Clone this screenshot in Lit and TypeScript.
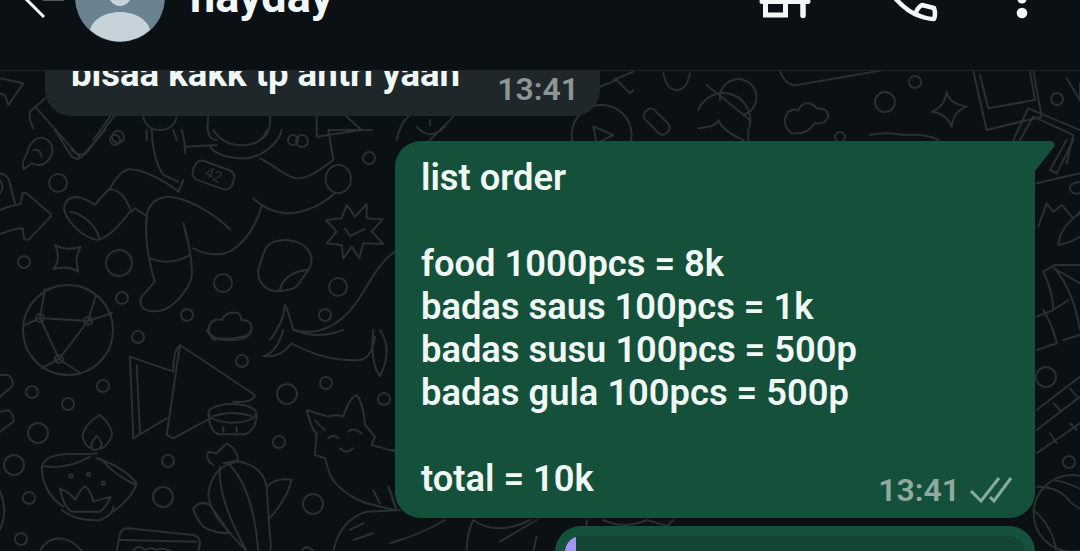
import { LitElement, css, html, svg } from 'lit'
import { customElement } from 'lit/decorators.js'

const ORDER_LINES: string[] = [
  'list order',
  '',
  'food 1000pcs = 8k',
  'badas saus 100pcs = 1k',
  'badas susu 100pcs = 500p',
  'badas gula 100pcs = 500p',
  '',
  'total = 10k',
]

// small rings scattered across the wallpaper: x, y, r
const RINGS: number[][] = [
  [118, 137, 6], [58, 183, 9], [24, 262, 6], [119, 263, 13], [223, 283, 9], [122, 298, 6],
  [187, 315, 6], [138, 337, 6], [302, 141, 6], [369, 158, 6], [338, 287, 9], [325, 315, 6],
  [32, 392, 6], [103, 386, 6], [68, 404, 6], [38, 433, 10], [14, 465, 10], [29, 498, 6],
  [21, 539, 6], [168, 461, 6], [163, 497, 10], [242, 361, 6], [287, 394, 10], [326, 383, 6],
  [384, 399, 6], [279, 442, 6], [313, 504, 10], [915, 82, 6], [885, 102, 10], [1057, 99, 6],
  [840, 137, 5], [1069, 462, 6], [1046, 377, 10], [115, 140, 5], [293, 140, 5],
]

const wallpaper = svg`
  ${RINGS.map(([x, y, r]) => svg`<circle cx=${x} cy=${y} r=${r}></circle>`)}

  <!-- globe -->
  <circle cx="68" cy="330" r="45"></circle>
  <path d="M25 325 L40 318 L88 321 L112 313 M40 318 L59 359 L88 321 M45 289 L40 318 M88 321 L96 295 M59 359 L42 368 M59 359 L80 373"></path>
  <circle cx="40" cy="318" r="4"></circle><circle cx="88" cy="321" r="4"></circle><circle cx="59" cy="359" r="4"></circle>

  <!-- astronaut and the shapes around it -->
  <g transform="translate(0 130) scale(.3333)" stroke-width="6">
    <path d="M0 240 C20 230 45 225 62 222 L68 190 Q75 185 85 195 L150 250 Q155 257 150 262 L90 325 Q80 335 72 325 L68 295 C45 295 20 305 0 312"></path>
    <path d="M0 130 Q25 135 30 160 L45 222 M0 150 Q15 170 0 190"></path>
    <path d="M192 235 Q195 205 225 200 Q260 205 285 225 C300 205 320 185 330 175 C355 130 375 115 395 118 C440 125 490 150 535 185 L550 150"></path>
    <path d="M330 178 Q365 180 385 225 L395 245 L405 235 L440 258"></path>
    <path d="M192 235 C195 265 240 320 290 330 Q330 325 390 245"></path>
    <path d="M210 245 C250 250 290 290 298 325"></path>
    <path d="M440 258 C435 320 440 360 460 440 L465 455 L425 500 Q415 520 430 535 Q450 550 490 540 C530 525 570 470 575 440 Q578 400 565 340 L550 280"></path>
    <path d="M440 258 C445 220 470 205 500 200 C560 200 640 250 690 298"></path>
    <path d="M450 385 Q510 410 570 375"></path>
    <path d="M580 355 Q640 385 690 365 C740 335 770 280 785 228"></path>
    <path d="M455 0 C455 50 470 110 490 135 L535 155 M545 0 Q555 30 555 70 M555 50 L650 45"></path>
    <path d="M640 0 Q670 50 740 45 Q790 40 800 0 M630 50 Q650 80 720 85 C790 90 840 30 845 0"></path>
    <path d="M780 85 C830 110 870 150 900 145 C940 140 970 110 1000 90 L985 0 L1115 0"></path>
    <rect x="578" y="105" width="125" height="60" rx="22" transform="rotate(20 640 135)"></rect>
    <text class="tag" x="640" y="150" transform="rotate(25 640 135)" text-anchor="middle">42</text>
    <ellipse cx="1015" cy="147" rx="38" ry="42"></ellipse>
    <path d="M760 205 Q800 245 860 250 C920 250 970 220 1005 190"></path>
    <path d="M1040 225 L1065 260 L1100 222 L1100 265 L1148 268 L1115 305 L1150 342 L1090 340 L1078 385 L1055 350 L1030 385 L1025 345 L980 340 L1010 305 L978 270 L1025 265 Z"></path>
    <path d="M1035 295 L1050 318 L1095 297"></path>
    <path d="M800 350 C830 320 900 325 925 360 Q945 390 925 420 L890 470 Q850 490 810 480 Q770 460 775 420 Q785 380 800 350 Z M840 480 Q850 430 920 420"></path>
    <path d="M165 345 Q200 365 242 350 Q222 385 235 425 Q200 405 160 418 Q185 385 165 345 Z"></path>
    <path d="M72 118 C60 90 85 75 85 55 C100 20 135 10 155 45 Q165 75 135 100 Q120 110 95 100 L72 118 M100 60 Q120 55 125 80"></path>
    <path d="M165 0 L215 80 Q235 95 250 75 L315 0"></path>
    <path d="M640 630 Q615 600 635 575 Q650 565 665 570 Q680 540 715 550 Q725 560 725 570 Q755 570 755 595 Q750 620 725 620 Q690 630 660 625 Z"></path>
    <path d="M1185 365 C1130 400 1100 480 1060 530 C1020 580 960 620 880 600 C870 570 865 540 855 525 Q850 570 835 590 Q820 620 810 630"></path>
  </g>

  <!-- lower left: paper scraps, lamp, cactus, fox -->
  <g transform="translate(0 330) scale(.3333)" stroke-width="6">
    <path d="M0 135 L25 135 Q45 155 35 170 L0 200 M0 245 L25 240 Q45 260 40 275 L0 305 M0 485 Q25 540 0 600"></path>
    <path d="M790 78 Q830 70 850 0 M790 78 Q840 85 875 40 C930 70 1000 95 1080 90 Q1115 85 1125 20 M1140 0 Q1180 60 1140 138 Q1110 100 1120 0 M885 0 Q950 30 1030 0"></path>
    <path d="M620 0 Q640 35 700 30 Q745 30 755 0"></path>
    <path d="M390 80 L520 125 M540 45 L765 195 Q760 220 700 215 M540 45 L500 315 L520 325 L630 265 M390 80 L400 325 L500 265 M410 105 L420 310 M540 45 Q520 60 520 125"></path>
    <ellipse cx="697" cy="250" rx="72" ry="28"></ellipse>
    <path d="M625 250 Q630 310 660 313 L735 313 Q770 300 770 250 M640 258 Q700 240 755 258 M670 290 L670 305 M710 292 L710 305"></path>
    <path d="M125 415 Q130 370 220 372 L270 372 L290 370 M125 415 Q130 490 190 530 M290 385 Q370 410 410 460 Q400 500 340 545 M130 408 Q200 420 270 380 M300 385 Q350 440 408 465"></path>
    <path d="M300 255 Q250 285 248 320 Q255 350 275 355 M300 255 Q340 290 335 320 Q320 350 305 355 M290 318 Q265 345 280 360 Q305 360 305 340 Q300 325 290 318"></path>
    <path d="M185 540 Q230 575 300 570 Q340 555 340 530 M180 475 Q215 490 225 510 Q240 480 255 468 Q275 485 280 515 L332 500 Q320 530 300 545 L215 545 Q190 530 180 475 Z"></path>
    <circle cx="213" cy="438" r="5"></circle><circle cx="266" cy="433" r="5"></circle><circle cx="310" cy="460" r="5"></circle>
    <path d="M625 490 Q640 400 720 395 Q790 410 800 470 L810 620 Q815 650 810 663 M625 490 Q625 540 690 610 L740 663 M660 410 Q650 500 740 663 M690 405 Q760 480 775 663"></path>
    <path d="M800 470 Q830 440 875 450 Q860 510 808 565 M580 535 Q600 510 630 525 L690 610 Q640 610 610 590 Q585 560 580 535 Z"></path>
    <path d="M640 405 Q615 390 625 365 L650 370 L680 340 Q710 355 715 390 Q695 395 670 400"></path>
    <path d="M920 240 L985 260 Q1010 250 1030 260 Q1050 200 1070 195 Q1090 220 1095 285 L1125 320 L1115 345 L1185 365 M920 240 Q935 300 950 310 L945 375 L975 385 L990 435 Q1020 490 1100 520 L1185 540"></path>
    <path d="M945 270 Q960 290 975 300 M985 325 Q1000 310 1015 325 M1045 305 Q1060 290 1085 310 M1020 355 Q1040 375 1060 355 M1120 480 L1140 520 M1165 470 L1185 530"></path>
    <path d="M1000 663 Q1020 570 1100 545 L1200 540 M1050 600 L1090 580 M1060 630 L1120 610"></path>
    <path d="M350 663 L360 610 Q365 595 385 595 L580 615 Q600 620 600 640 L595 663 M360 630 L590 635 M400 663 Q415 640 435 660 Q450 650 470 660 Q485 650 510 663"></path>
    <path d="M120 663 Q140 625 180 625 Q220 630 245 663 M905 663 Q920 640 940 663"></path>
  </g>

  <!-- strip above the outgoing bubble -->
  <g transform="translate(0 70) scale(.3333)" stroke-width="6">
    <path d="M0 25 L70 40 L25 105 L15 75 L0 70"></path>
    <path d="M135 85 L90 125 Q85 145 100 175 M105 110 L240 262 M345 135 L270 235 Q250 270 215 240"></path>
    <path d="M280 210 L330 140 M430 140 Q440 180 480 180 Q520 180 530 140 M440 210 L440 180 M520 180 L530 210"></path>
    <path d="M625 140 Q615 210 650 210 M810 140 Q815 190 780 210"></path>
    <path d="M950 140 L950 200 L1085 180 L1040 140"></path>
    <path d="M1190 210 Q1200 160 1225 140 M1290 150 L1290 165 M1250 170 Q1290 215 1335 170 M1360 140 L1290 210"></path>
  </g>
  <g transform="translate(400 60) scale(.3333)" stroke-width="6">
    <circle cx="605" cy="225" r="90"></circle>
    <path d="M580 200 L640 225 L590 250 Z M600 80 L650 60 L690 100 L700 90 M640 60 L700 35 M790 40 Q800 90 830 90 Q860 90 870 40"></path>
    <rect x="725" y="165" width="90" height="40" rx="16" transform="rotate(45 770 185)"></rect>
  </g>
  <g transform="translate(700 0) scale(.3333)" stroke-width="6">
    <path d="M240 215 Q260 260 290 255 L540 212 M20 255 L150 360"></path>
    <path d="M60 300 A 55 55 0 1 1 130 345"></path>
    <path d="M-5 330 A 75 75 0 0 1 145 390 L145 420 M-5 385 Q50 380 55 360 Q70 395 130 420"></path>
    <path d="M275 400 Q240 370 265 335 Q285 325 295 330 Q310 300 340 315 Q345 320 350 325 Q385 325 385 350 Q375 375 345 370 Q320 405 275 400 Z"></path>
    <path d="M740 275 Q745 310 800 320 Q760 335 755 380 Q740 340 695 335 Q735 320 740 275 Z"></path>
    <path d="M820 213 L860 390 L1025 350 L1000 213 M840 225 L865 325 L1005 300 L990 213"></path>
    <path d="M940 420 L985 325 L1140 390 M960 420 L1000 350 L1120 405 L1100 490 M1100 235 L1140 300 L1140 250"></path>
    <path d="M510 405 Q560 395 610 405 Q680 400 715 420"></path>
  </g>

  <!-- right edge -->
  <g transform="translate(1030 140) scale(.3333)" stroke-width="6">
    <path d="M20 130 L150 100 M110 0 L60 90 L80 100 L130 0"></path>
    <path d="M150 125 Q115 130 120 150 Q130 165 150 160"></path>
    <path d="M25 260 L50 190 L70 215 L95 195 L130 235 L150 215 M85 315 Q90 260 150 220 M85 315 Q120 310 150 290"></path>
    <path d="M40 395 Q70 460 70 510 L20 530 M40 395 L75 375 L150 375 M70 380 Q130 450 150 570 M70 510 L115 480 M80 390 L150 430 M20 630 L80 610 Q70 560 40 510 M100 600 L150 585"></path>
    <path d="M20 810 L150 710 M20 870 L150 770 M20 940 L150 850 M70 790 L90 810 M120 745 L140 770 M60 880 L80 910 M120 850 L140 870"></path>
    <circle cx="126" cy="1120" r="115"></circle>
    <path d="M20 1040 Q90 1040 120 1085 Q170 1130 260 1140 M10 1110 Q70 1160 80 1240 M70 1020 Q130 1030 170 1060"></path>
  </g>

  <!-- under the outgoing bubble -->
  <g transform="translate(390 440) scale(.3333)" stroke-width="6">
    <path d="M0 310 Q100 280 165 240 M230 333 Q230 280 250 240 Q320 290 420 240 M330 305 L440 240 M430 333 L440 290 M590 240 L590 260 M640 240 Q700 270 770 240 M770 240 L840 260 M850 240 L830 260"></path>
    <path d="M0 30 L15 30 M0 150 L20 210"></path>
  </g>
`

@customElement('app-root')
export class AppRoot extends LitElement {
  static styles = css`
    :host {
      display: block;
      position: relative;
      width: 1080px;
      height: 551px;
      overflow: hidden;
      background: #0b1014;
      font-family: Roboto, 'Liberation Sans', sans-serif;
      color: #f0f8f6;
    }
    .wallpaper {
      position: absolute;
      inset: 0;
      fill: none;
      stroke: #2a2f33;
      stroke-width: 2;
      stroke-linecap: round;
      stroke-linejoin: round;
    }
    .wallpaper .tag {
      font: 400 46px Roboto, sans-serif;
      fill: #2a2f33;
      stroke: none;
    }
    .page {
      position: relative;
      display: flex;
      flex-direction: column;
      height: 100%;
    }

    header {
      flex: none;
      height: 70px;
      border-bottom: 1px solid #1f2427;
      background: #0b1014;
      overflow: hidden;
    }
    .bar {
      display: flex;
      align-items: flex-end;
      height: 42px;
      padding-left: 22px;
    }
    .back {
      flex: none;
      width: 42px;
      height: 18px;
      margin: 0 11px 24px 0;
    }
    .avatar {
      flex: none;
      width: 90px;
      height: 90px;
      border-radius: 50%;
    }
    .name {
      margin: 0 0 20px 25px;
      font-size: 45px;
      line-height: 50px;
      font-weight: 700;
      color: #f1f6f8;
    }
    .actions {
      align-self: flex-start;
      display: flex;
      margin-left: auto;
      padding-right: 52px;
    }
    .store { width: 50px; height: 20px; }
    .phone { width: 52px; height: 20px; margin-left: 75px; }
    .more { width: 12px; height: 20px; margin-left: 79px; }
    svg.ic { display: block; overflow: visible; }

    .chat {
      flex: 1;
      min-height: 0;
      overflow: hidden;
      display: flex;
      flex-direction: column;
    }
    .bubble { flex: none; }
    .in {
      align-self: flex-start;
      display: flex;
      align-items: flex-end;
      width: 555px;
      height: 116px;
      box-sizing: border-box;
      margin: -71px 0 25px 45px;
      padding: 0 21px 10px 26px;
      background: #1f272b;
      border-radius: 0 0 26px 26px;
    }
    .in .text {
      flex: 1;
      font-size: 36.6px;
      line-height: 40px;
      font-weight: 700;
      margin-bottom: 12px;
      white-space: nowrap;
    }
    .time {
      font-size: 32px;
      line-height: 34px;
      font-weight: 600;
      white-space: nowrap;
    }
    .in .time { color: #8d9598; }

    .out {
      position: relative;
      align-self: flex-start;
      width: 640px;
      height: 377px;
      box-sizing: border-box;
      margin: 0 0 8px 395px;
      padding: 15px 26px 0;
      background: #15503a;
      border-radius: 26px 0 26px 26px;
    }
    .tail {
      position: absolute;
      top: 0;
      left: 100%;
      width: 20px;
      height: 32px;
      fill: #15503a;
    }
    .line {
      height: 43px;
      font-size: 36.3px;
      line-height: 43px;
      font-weight: 600;
      white-space: pre;
    }
    .meta {
      position: absolute;
      right: 22px;
      bottom: 11px;
      display: flex;
      align-items: center;
      gap: 9px;
      color: #8fa99f;
    }
    .ticks {
      width: 44px;
      height: 28px;
      fill: none;
      stroke: #86ad9c;
      stroke-width: 3;
    }

    .next {
      align-self: flex-start;
      width: 480px;
      height: 60px;
      box-sizing: border-box;
      margin-left: 555px;
      padding: 10px 10px 0;
      background: #15503a;
      border-radius: 26px 26px 0 0;
    }
    .quote {
      height: 100%;
      background: #124632;
      border-radius: 16px 16px 0 0;
      overflow: hidden;
    }
    .quote::before {
      content: '';
      display: block;
      width: 11px;
      height: 100%;
      background: #a595f5;
    }
  `

  protected render(): unknown {
    return html`
      <svg class="wallpaper" viewBox="0 0 1080 551" width="1080" height="551">${wallpaper}</svg>
      <div class="page">
        <header>
          <div class="bar">
            <svg class="ic back" viewBox="0 0 42 18" fill="none" stroke="#f1f6f8" stroke-width="3">
              <path d="M0 -5 L22 17"></path>
              <path d="M21 0 L42 0" stroke="#6b7073" stroke-width="1.5"></path>
            </svg>
            <svg class="ic avatar" viewBox="0 0 90 90">
              <circle cx="45" cy="45" r="45" fill="#6b8290"></circle>
              <ellipse cx="45" cy="34" rx="14" ry="20" fill="#c6d3da"></ellipse>
              <path d="M15 78 C18 66 32 60 45 60 C58 60 72 66 75 78 A 45 45 0 0 1 15 78 Z" fill="#c6d3da"></path>
            </svg>
            <div class="name">hayday</div>
            <div class="actions">
              <svg class="ic store" viewBox="0 0 50 20" fill="none" stroke="#f4f7f9" stroke-linecap="round">
                <path d="M2 1.5 L48 1.5" stroke-width="5"></path>
                <path d="M5.5 2 L5.5 15 L25.5 15 L25.5 2" stroke-width="5"></path>
                <path d="M43 2 L43 15.5" stroke-width="5.5"></path>
              </svg>
              <svg class="ic phone" viewBox="0 0 52 20" fill="none" stroke="#f4f7f9" stroke-width="4.5" stroke-linejoin="round" stroke-linecap="round">
                <path d="M10 -2 C17 6 25 13 35 16 Q43 19 49 19 Q51 14 49 8 L37 5 Q32 8 31 13"></path>
              </svg>
              <svg class="ic more" viewBox="0 0 12 20" fill="#f4f7f9">
                <circle cx="6" cy="-1" r="4.5"></circle>
                <circle cx="6" cy="13" r="5.3"></circle>
              </svg>
            </div>
          </div>
        </header>

        <div class="chat">
          <div class="bubble in">
            <div class="text">bisaa kakk tp antri yaan</div>
            <div class="time">13:41</div>
          </div>

          <div class="bubble out">
            <svg class="tail" viewBox="0 0 20 32">
              <path d="M-1 0 L15 0 Q21 1 19 6 L0 30 Z"></path>
            </svg>
            <div>${ORDER_LINES.map((l) => html`<div class="line">${l}</div>`)}</div>
            <div class="meta">
              <span class="time">13:41</span>
              <svg class="ticks" viewBox="0 0 44 28">
                <path d="M2 15 L12 25 L30 2"></path>
                <path d="M21 21 L25 25 L42 2"></path>
              </svg>
            </div>
          </div>

          <div class="bubble next"><div class="quote"></div></div>
        </div>
      </div>
    `
  }
}

declare global {
  interface HTMLElementTagNameMap {
    'app-root': AppRoot
  }
}
